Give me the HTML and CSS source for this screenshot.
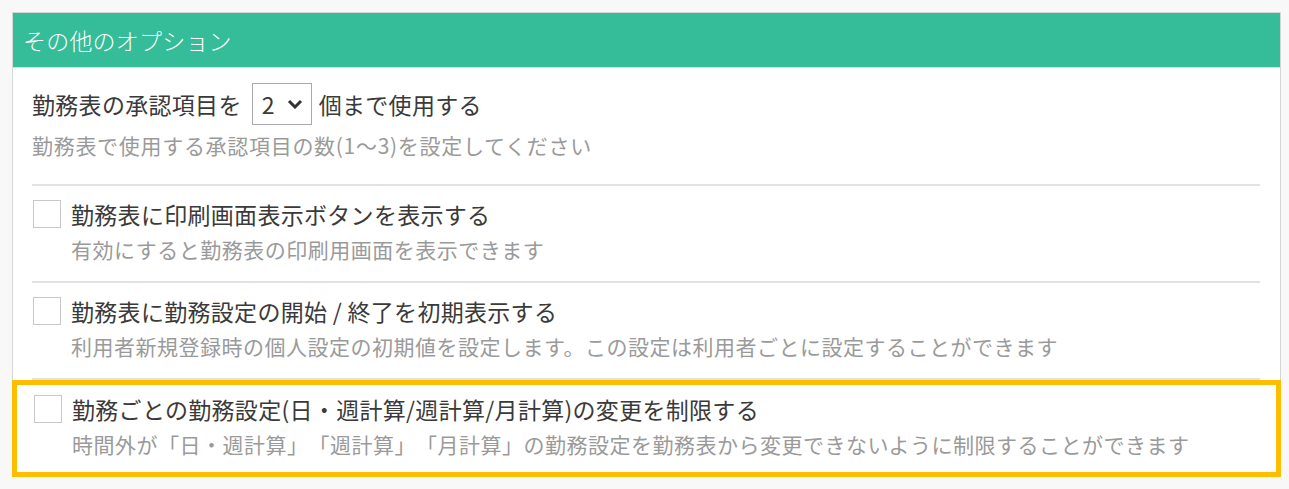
FILE: index.html
```html
<!DOCTYPE html>
<html lang="ja">
<head>
    <meta charset="UTF-8">
    <title>その他のオプション</title>
    <link rel="stylesheet" href="styles.css">
</head>
<body>

    <div class="panel">
        <!-- 見出し -->
        <div class="panel-title">その他のオプション</div>

        <div class="panel-body">
            <!-- 承認項目の数 -->
            <div class="option option-first">
                <div class="option-line">
                    <span>勤務表の承認項目を</span>
                    <div class="fake-select">
                        <span class="fake-select-value">2</span>
                        <svg class="chevron" width="16" height="10" viewBox="0 0 16 10">
                            <path d="M2 2 L8 8 L14 2" fill="none" stroke="#333" stroke-width="3"/>
                        </svg>
                    </div>
                    <span>個まで使用する</span>
                </div>
                <div class="option-help">勤務表で使用する承認項目の数(1～3)を設定してください</div>
            </div>

            <div class="option">
                <div class="option-line">
                    <span class="checkbox"></span>
                    <span>勤務表に印刷画面表示ボタンを表示する</span>
                </div>
                <div class="option-help indent">有効にすると勤務表の印刷用画面を表示できます</div>
            </div>

            <div class="option">
                <div class="option-line">
                    <span class="checkbox"></span>
                    <span>勤務表に勤務設定の開始 / 終了を初期表示する</span>
                </div>
                <div class="option-help indent">利用者新規登録時の個人設定の初期値を設定します。この設定は利用者ごとに設定することができます</div>
            </div>

            <!-- 強調表示されている項目 -->
            <div class="option option-highlight">
                <div class="option-line">
                    <span class="checkbox"></span>
                    <span>勤務ごとの勤務設定(日・週計算/週計算/月計算)の変更を制限する</span>
                </div>
                <div class="option-help indent">時間外が「日・週計算」「週計算」「月計算」の勤務設定を勤務表から変更できないように制限することができます</div>
            </div>
        </div>
    </div>

</body>
</html>
```

FILE: styles.css
```css
body {
    margin: 12px 8px 12px 12px;
    background: #f8f8f8;
    font-family: "Noto Sans CJK JP", "Noto Sans", sans-serif;
    color: #3a3a3a;
    text-spacing-trim: space-all;
}

/* パネル */
.panel {
    background: #fff;
    border: 1px solid #d6d6d6;
    box-shadow: 0 0 8px rgba(0, 0, 0, 0.12);
}

.panel-title {
    height: 54px;
    line-height: 54px;
    padding-left: 10px;
    background: #35bc98;
    border-bottom: 1px solid #dcdcdc;
    color: #fff;
    font-size: 23px;
    font-weight: 300;
    letter-spacing: 0.2px;
}

.panel-body {
    padding: 0 20px 0 19px;
}

/* 各オプション行 */
.option {
    padding: 13px 0 16px;
    border-bottom: 2px solid #e2e2e2;
}

.option-first {
    padding: 15px 0 23px;
}

.option-line {
    display: flex;
    align-items: center;
    height: 30px;
    font-size: 23px;
    line-height: 30px;
    letter-spacing: 0.3px;
    white-space: nowrap;
}

.option-first .option-line {
    height: 42px;
}

.option-help {
    margin-top: 4px;
    font-size: 21px;
    line-height: 32px;
    letter-spacing: 0.5px;
    color: #9a9a9a;
    white-space: nowrap;
}

.option-first .option-help {
    letter-spacing: 0.7px;
}

.indent {
    padding-left: 39px;
}

/* チェックボックス */
.checkbox {
    width: 26px;
    height: 26px;
    margin-left: 1px;
    margin-right: 10px;
    border: 1px solid #c8c8c8;
    background: #fff;
    flex-shrink: 0;
}

/* セレクトボックス */
.fake-select {
    display: flex;
    align-items: center;
    width: 58px;
    height: 40px;
    margin: 0 7px 0 10px;
    border: 1px solid #aaa;
}

.fake-select-value {
    margin-left: 9px;
    font-size: 23px;
}

.chevron {
    margin-left: 12px;
}

/* 黄色の強調枠 */
.option-highlight {
    margin: 0 -21px -1px -20px;
    padding: 9px 0 12px 16px;
    border: 5px solid #fcbf00;
}
```
